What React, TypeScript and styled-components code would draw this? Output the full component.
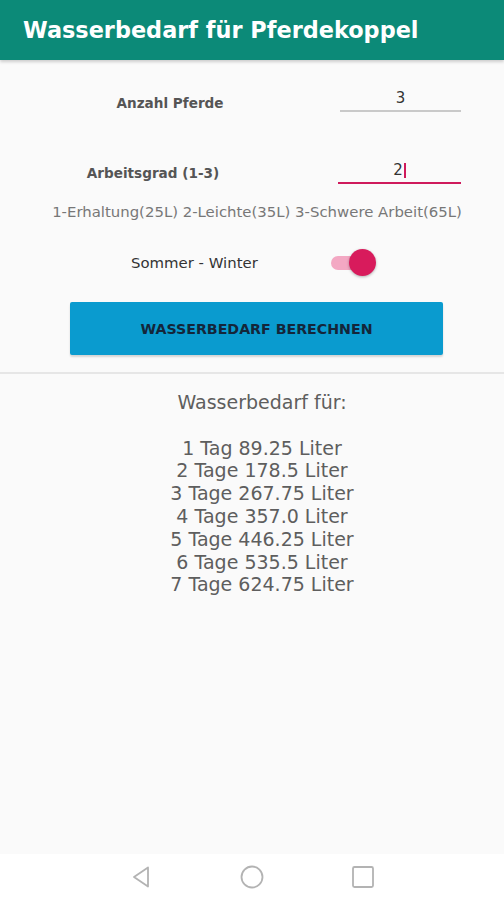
import { createGlobalStyle, styled } from "styled-components";

const GlobalStyle = createGlobalStyle`
  html, body {
    margin: 0;
    padding: 0;
    background: #fafafa;
    font-family: "DejaVu Sans", "Liberation Sans", sans-serif;
  }
`;

const Screen = styled.div`
  width: 504px;
  height: 900px;
  display: flex;
  flex-direction: column;
  background: #fafafa;
  overflow: hidden;
`;

const AppBar = styled.header`
  height: 60px;
  flex-shrink: 0;
  background: #0c8a78;
  display: flex;
  align-items: center;
  padding-left: 23px;
  box-shadow: 0 2px 3px rgba(0, 0, 0, 0.18);
  color: #ffffff;
  font-size: 22.4px;
  font-weight: 700;
`;

const Content = styled.main`
  flex: 1;
  display: flex;
  flex-direction: column;
`;

const Form = styled.section`
  display: flex;
  flex-direction: column;
  padding-top: 27px;
`;

const FieldRow = styled.div<{ $labelWidth: number; $top: number }>`
  display: grid;
  grid-template-columns: ${(p) => p.$labelWidth}px 1fr;
  align-items: end;
  margin-top: ${(p) => p.$top}px;
  padding-right: 43px;
`;

const Label = styled.label<{ $lift?: number }>`
  text-align: center;
  font-size: 13.6px;
  font-weight: 700;
  color: #555555;
  padding-bottom: ${(p) => p.$lift ?? 1}px;
`;

const Field = styled.div<{ $focused?: boolean }>`
  justify-self: end;
  width: ${(p) => (p.$focused ? 123 : 121)}px;
  height: 25px;
  display: flex;
  align-items: flex-end;
  justify-content: center;
  padding-bottom: 3px;
  box-sizing: border-box;
  border-bottom: ${(p) => (p.$focused ? "2px solid #cf1a5c" : "2px solid #c9c9c9")};
  font-size: 15px;
  color: #333333;
`;

const Caret = styled.span`
  display: inline-block;
  width: 2px;
  height: 15px;
  margin-left: 1px;
  margin-bottom: 1px;
  background: #cf1a5c;
`;

const Hint = styled.p`
  margin: 19px 0 0;
  text-align: center;
  padding-left: 10px;
  font-size: 14.9px;
  color: #777777;
`;

const SwitchRow = styled.div`
  display: flex;
  align-items: center;
  margin-top: 27px;
  padding-left: 131px;
  height: 30px;
`;

const SwitchLabel = styled.span`
  font-size: 14.9px;
  color: #333333;
  width: 200px;
`;

const Track = styled.div`
  position: relative;
  width: 38px;
  height: 14px;
  border-radius: 7px;
  background: #f3a8c3;
`;

const Thumb = styled.div`
  position: absolute;
  right: -7px;
  top: -7px;
  width: 27px;
  height: 27px;
  border-radius: 50%;
  background: #d81b5c;
  box-shadow: 0 1px 3px rgba(0, 0, 0, 0.3);
`;

const CalcButton = styled.button`
  margin: 24px 0 0 70px;
  width: 373px;
  height: 53px;
  border: 0;
  border-radius: 2px;
  background: #0a9bcf;
  box-shadow: 0 2px 2px rgba(0, 0, 0, 0.15);
  color: #14263a;
  font-family: "DejaVu Sans", "Liberation Sans", sans-serif;
  font-size: 14.2px;
  font-weight: 700;
  text-transform: uppercase;
`;

const Divider = styled.hr`
  margin: 17px 0 0;
  border: 0;
  height: 2px;
  background: #e6e6e6;
`;

const Result = styled.div`
  margin-top: 17px;
  padding-left: 20px;
  text-align: center;
  font-size: 19px;
  line-height: 22.8px;
  color: #5e5e5e;
`;

const ResultTitle = styled.div`
  margin-bottom: 22.8px;
`;

const NavBar = styled.nav`
  height: 46px;
  flex-shrink: 0;
  background: #ffffff;
  display: flex;
  align-items: center;
  justify-content: center;
  gap: 87px;
`;

const days = [
  "1 Tag 89.25 Liter",
  "2 Tage 178.5 Liter",
  "3 Tage 267.75 Liter",
  "4 Tage 357.0 Liter",
  "5 Tage 446.25 Liter",
  "6 Tage 535.5 Liter",
  "7 Tage 624.75 Liter",
];

export default function App() {
  return (
    <>
      <GlobalStyle />
      <Screen>
        <AppBar>Wasserbedarf für Pferdekoppel</AppBar>
        <Content>
          <Form>
            <FieldRow $labelWidth={340} $top={0}>
              <Label>Anzahl Pferde</Label>
              <Field>3</Field>
            </FieldRow>
            <FieldRow $labelWidth={306} $top={47}>
              <Label $lift={3}>Arbeitsgrad (1-3)</Label>
              <Field $focused>
                2<Caret />
              </Field>
            </FieldRow>
            <Hint>1-Erhaltung(25L) 2-Leichte(35L) 3-Schwere Arbeit(65L)</Hint>
            <SwitchRow>
              <SwitchLabel>Sommer - Winter</SwitchLabel>
              <Track>
                <Thumb />
              </Track>
            </SwitchRow>
            <CalcButton>Wasserbedarf berechnen</CalcButton>
          </Form>
          <Divider />
          <Result>
            <ResultTitle>Wasserbedarf für:</ResultTitle>
            {days.map((d) => (
              <div key={d}>{d}</div>
            ))}
          </Result>
        </Content>
        <NavBar>
          <svg width="24" height="24" viewBox="0 0 24 24" fill="none" stroke="#b3b3b3" strokeWidth="1.8" strokeLinejoin="round">
            <path d="M19 2.5 L5 12 L19 21.5 Z" />
          </svg>
          <svg width="24" height="24" viewBox="0 0 24 24" fill="none" stroke="#b3b3b3" strokeWidth="1.8">
            <circle cx="12" cy="12" r="10.5" />
          </svg>
          <svg width="24" height="24" viewBox="0 0 24 24" fill="none" stroke="#b3b3b3" strokeWidth="1.8">
            <rect x="2" y="2" width="20" height="20" rx="1.5" />
          </svg>
        </NavBar>
      </Screen>
    </>
  );
}
